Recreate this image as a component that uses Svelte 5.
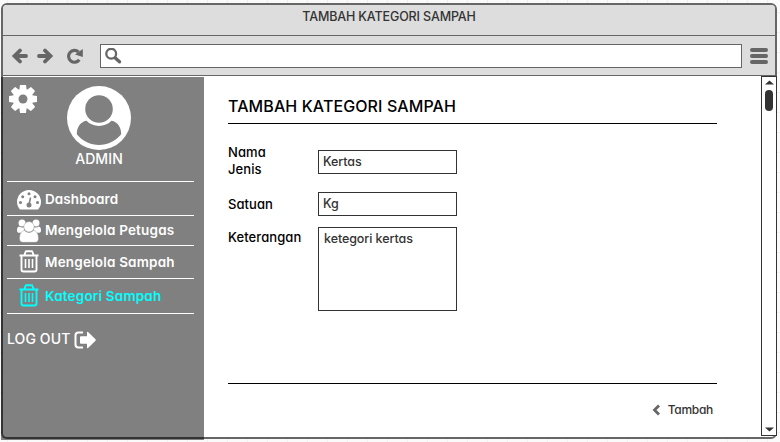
<script>
  const menu = [
    { label: 'Dashboard', icon: 'gauge', cls: 'dashboard' },
    { label: 'Mengelola Petugas', icon: 'users', cls: 'petugas' },
    { label: 'Mengelola Sampah', icon: 'trash', cls: 'sampah' },
    { label: 'Kategori Sampah', icon: 'trash', cls: 'kategori active' }
  ];
</script>

<div class="canvas">
  <div class="window">
    <header class="titlebar"><span>TAMBAH KATEGORI SAMPAH</span></header>
    <nav class="toolbar">
      <svg class="back" width="17" height="16" viewBox="0 0 17 16"><path d="M9 2.500 3.500 8 9 13.500M4 8h11" fill="none" stroke="#666" stroke-width="3.800" stroke-linecap="round" /></svg>
      <svg class="forward" width="17" height="16" viewBox="0 0 17 16"><path d="m8 2.500 5.500 5.500L8 13.500M13 8H2" fill="none" stroke="#666" stroke-width="3.800" stroke-linecap="round" /></svg>
      <svg class="reload" width="18" height="16" viewBox="0 0 18 16"><path d="M12.500 4A5.900 5.900 0 1 0 13.300 11.800" fill="none" stroke="#666" stroke-width="3.200" /><path d="M16.800 1V9L9 6.500z" fill="#666" /></svg>
      <div class="address">
        <svg width="17" height="17" viewBox="0 0 17 17" fill="none" stroke="#666"><circle cx="6.200" cy="5.700" r="4.900" stroke-width="2.300" /><path d="m10.300 10 4.200 3.800" stroke-width="3.400" stroke-linecap="round" /></svg>
      </div>
      <div class="burger"><i></i><i></i><i></i></div>
    </nav>
    <div class="body">
      <aside>
        <div class="profile">
          <svg class="gear" width="28" height="28" viewBox="0 0 28 28">
            <g fill="#fff">
              <circle cx="14" cy="14" r="10.2" />
              {#each [0, 45, 90, 135, 180, 225, 270, 315] as angle}
                <path d="m11-.1.8-.1h4.400l.8.3.7 5.300h-7.400z" transform="rotate({angle} 14 14)" />
              {/each}
            </g>
            <circle cx="14" cy="14" r="4.5" fill="#808080" />
          </svg>
          <div class="person">
            <svg width="64" height="64" viewBox="0 0 64 64">
              <circle cx="32" cy="32" r="32" fill="#fff" />
              <circle cx="32" cy="23" r="13.8" fill="#808080" />
              <path d="M19.500 34.800c6 6.800 19 6.800 25 0 6.400 1 9.800 7.200 9.700 13.400C42.500 62.500 21.500 62.500 9.800 48.200c-.1-6.200 3.300-12.400 9.700-13.400z" fill="#808080" />
            </svg>
            <span>ADMIN</span>
          </div>
        </div>
        <ul>
          {#each menu as item}
            <li class={item.cls}>
              {#if item.icon === 'gauge'}
                <svg width="26" height="24" viewBox="0 0 26 24"><path d="M4 21.500C2 19.500 1 16.700 1 14a12 12 0 0 1 24 0c0 2.700-1 5.500-3 7.500z" fill="#fff" /><g fill="#808080"><circle cx="4.500" cy="14.500" r="1.500" /><circle cx="6.700" cy="8.800" r="1.500" /><circle cx="13" cy="5.700" r="1.500" /><circle cx="19" cy="8.800" r="1.500" /><circle cx="21.500" cy="14.500" r="1.500" /><circle cx="13" cy="17" r="2.500" /></g><path d="m13 17 1.500-7.500" stroke="#808080" stroke-width="1.500" /></svg>
              {:else if item.icon === 'users'}
                <svg width="26" height="24" viewBox="0 0 26 24"><g fill="#fff"><circle cx="6" cy="4" r="3.500" /><circle cx="20" cy="4" r="3.500" /><path d="M3 7.500c2 1.400 4 1.200 5.200.5-.3 3 .2 4.600 1.800 5.800H3.500C1.800 13.800 1 13 1 11.500 1 9.500 1.600 7.800 3 7.500zM23 7.500c-2 1.400-4 1.200-5.200.5.3 3-.2 4.600-1.800 5.800h6.500c1.700 0 2.500-.8 2.500-2.300 0-2-.6-3.700-2-4z" /></g><g fill="#fff" stroke="#808080" stroke-width=".4"><path d="M8.500 11.500c2.500 2.500 6.500 2.500 9 0 3.500.3 5 4 5 8 0 2.500-1.200 3.800-3.300 3.800H6.800c-2.100 0-3.300-1.300-3.300-3.800 0-4 1.500-7.700 5-8z" /><circle cx="13" cy="7.800" r="5.200" /></g></svg>
              {:else}
                <svg width="26" height="24" viewBox="0 0 26 24" fill="none" stroke="currentColor"><path d="M3.500 5.500h19M8.500 5l1-3q.2-.7 1-.7h5q.8 0 1 .7l1 3M5.500 6v13.500q0 2 2 2h11q2 0 2-2V6" stroke-width="1.900" /><path d="M9.500 9v9M13 9v9M16.500 9v9" stroke-width="1.600" /></svg>
              {/if}
              <span>{item.label}</span>
            </li>
          {/each}
        </ul>
        <div class="logout">
          <span>LOG OUT</span>
          <svg width="23" height="18" viewBox="0 0 23 18"><path d="M9 1.500H4.500Q1.500 1.500 1.500 4.500v9q0 3 3 3H9" fill="none" stroke="#fff" stroke-width="2" /><path d="M7 5.200h6V1.500q0-1.200 1-.4l7.500 7.200q.7.700 0 1.400L14 16.900q-1 .8-1-.4v-3.700H7q-1 0-1-1V6.200q0-1 1-1z" fill="#fff" /></svg>
        </div>
      </aside>
      <main>
        <h1><span>TAMBAH KATEGORI SAMPAH</span></h1>
        <form>
          <span class="label nama">Nama<br />Jenis</span>
          <div class="field nama-field"><span>Kertas</span></div>
          <span class="label satuan">Satuan</span>
          <div class="field"><span>Kg</span></div>
          <span class="label keterangan">Keterangan</span>
          <div class="field area"><span>ketegori kertas</span></div>
        </form>
        <footer>
          <svg width="9" height="12" viewBox="0 0 9 12"><path d="M7 1.500 2.500 6 7 10.500" fill="none" stroke="#666" stroke-width="2.800" /></svg>
          <span>Tambah</span>
        </footer>
      </main>
      <div class="scrollbar">
        <svg width="9" height="5" viewBox="0 0 9 5"><path d="M0 4.500 4.500.5 9 4.500z" fill="#333" /></svg>
        <div class="thumb"></div>
        <svg class="down" width="9" height="5" viewBox="0 0 9 5"><path d="M0 .5 4.500 4.500 9 .5z" fill="#333" /></svg>
      </div>
    </div>
  </div>
</div>

<style>
  .canvas {
    box-sizing: border-box;
    width: 780px;
    height: 442px;
    padding: 3px 3px 3px 1px;
    overflow: hidden;
    background-color: #fafafa;
    background-image: linear-gradient(90deg, #f0f0f0 1px, transparent 1px), linear-gradient(#f0f0f0 1px, transparent 1px);
    background-size: 20px 20px;
    background-position: 7px 12px;
    font-family: Inter, "Open Sans", sans-serif;
    font-feature-settings: "cv11";
    font-weight: 500;
    color: #000;
    white-space: nowrap;
  }
  svg { display: block; flex: none; }
  .window {
    box-sizing: border-box;
    width: 776px;
    height: 436px;
    border: 2px solid #666;
    border-radius: 6px;
    background: #fff;
  }
  .titlebar {
    box-sizing: border-box;
    height: 31px;
    padding-top: 3px;
    border-bottom: 1px solid #666;
    border-radius: 4px 4px 0 0;
    background: #ddd;
    text-align: center;
    font-size: 12.5px;
    line-height: 17px;
    letter-spacing: -0.13px;
    color: #333;
  }
  .toolbar {
    box-sizing: border-box;
    display: flex;
    align-items: center;
    height: 40px;
    padding: 0 7px 0 8px;
    border-bottom: 1px solid #666;
    background: #ddd;
  }
  .forward { margin-left: 9px; }
  .reload { margin-left: 12px; }
  .address {
    box-sizing: border-box;
    width: 642px;
    height: 24px;
    margin-left: 16px;
    padding: 3px 4px;
    border: 1px solid #666;
    background: #fff;
  }
  .burger { display: grid; gap: 2px; margin-left: 8px; }
  .burger i { width: 18px; height: 4px; border-radius: 2px; background: #666; }
  .body { display: flex; height: 363px; }
  aside {
    position: relative;
    box-sizing: border-box;
    flex: none;
    width: 203px;
    height: 363px;
    margin: 1px 0 0 -2px;
    padding-left: 2px;
    background: #808080;
    color: #fff;
  }
  aside::after {
    content: "";
    position: absolute;
    inset: 0 0 1px 0;
    border: solid #333;
    border-width: 0 0 2px 2px;
    border-bottom-left-radius: 6px;
  }
  .profile { display: flex; height: 104px; padding-left: 6px; }
  .gear { margin-top: 8px; }
  .person {
    display: flex;
    flex-direction: column;
    align-items: center;
    width: 64px;
    margin: 9px 0 0 30px;
    font-size: 14px;
    line-height: 17px;
    letter-spacing: 0.1px;
  }
  ul { width: 187px; margin: 0 0 0 4px; padding: 0; list-style: none; border-bottom: 1px solid #fff; }
  li {
    box-sizing: border-box;
    display: flex;
    align-items: center;
    padding-left: 9px;
    border-top: 1px solid #fff;
    font-size: 13.5px;
    font-weight: 600;
    line-height: 18px;
    letter-spacing: 0.19px;
  }
  li span { margin-left: 3px; }
  .dashboard { height: 34px; padding-top: 3px; letter-spacing: 0.08px; }
  .dashboard span, .petugas span { margin-bottom: 2px; }
  .petugas { height: 30px; }
  .sampah { height: 33px; }
  .kategori { height: 35px; }
  .active { color: #0ff; }
  .logout { display: flex; align-items: center; margin: 16px 0 0 4px; font-size: 14px; line-height: 18px; letter-spacing: 0.1px; }
  .logout span { margin-bottom: 1px; }
  .logout svg { margin-left: 4px; }
  main { box-sizing: border-box; flex: none; width: 557px; padding: 18px 44px 0 24px; }
  h1 {
    box-sizing: border-box;
    height: 30px;
    margin: 0;
    border-bottom: 1px solid #000;
    font-size: 16px;
    font-weight: 500;
    line-height: 24px;
    letter-spacing: 0.1px;
  }
  form {
    display: grid;
    grid-template-columns: 90px 139px;
    grid-template-rows: 48px 35px 84px;
    padding-top: 20px;
    height: 239px;
    font-size: 13px;
    line-height: 17px;
    letter-spacing: 0.08px;
  }
  .nama-field { margin-top: 6px; }
  .satuan { padding-top: 4px; }
  .keterangan { padding-top: 2px; }
  .field {
    box-sizing: border-box;
    height: 24px;
    padding: 2px 4px;
    border: 1px solid #333;
    color: #333;
    font-size: 12.5px;
    letter-spacing: -0.08px;
  }
  .area { height: 84px; padding-left: 5px; }
  footer {
    display: flex;
    align-items: center;
    justify-content: flex-end;
    gap: 7px;
    height: 17px;
    padding: 17px 4px 0 0;
    border-top: 1px solid #000;
    font-size: 12px;
    line-height: 17px;
    letter-spacing: -0.3px;
    color: #333;
  }
  .scrollbar {
    box-sizing: border-box;
    display: flex;
    flex: none;
    flex-direction: column;
    align-items: center;
    width: 16px;
    height: 360px;
    padding: 3px 0;
    border: 1px solid #333;
    background: #fff;
  }
  .thumb { width: 8px; height: 21px; margin-top: 5px; border-radius: 4px; background: #333; }
  .down { margin-top: auto; }
</style>
